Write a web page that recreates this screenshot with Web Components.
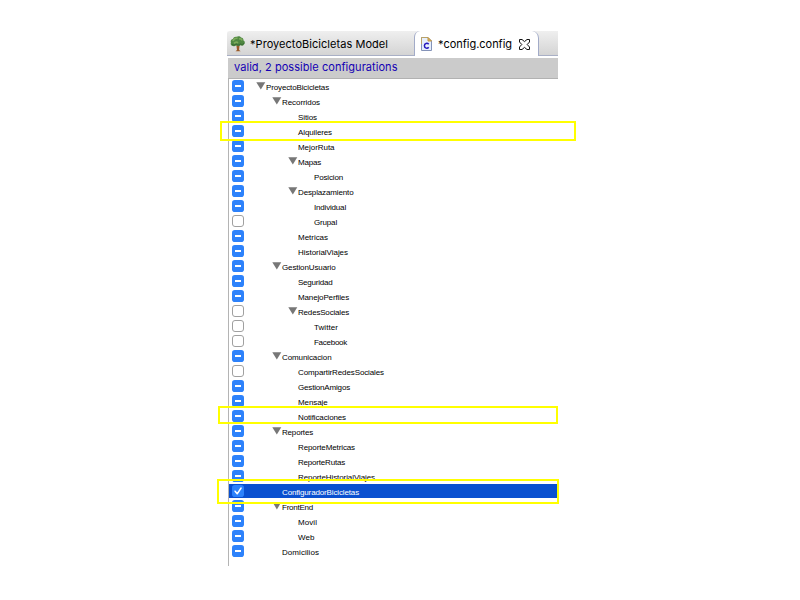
<!DOCTYPE html>
<html lang="es">
<head>
<meta charset="utf-8">
<title>config.config</title>
<style>
body { margin: 0; background: #fff; width: 800px; height: 600px; overflow: hidden; position: relative; }
.window { margin: 31px 0 0 228px; width: 330px; }
</style>
</head>
<body>
<config-editor class="window"></config-editor>
<highlight-box style="left:220px;top:121px;width:356px;height:20px"></highlight-box>
<highlight-box style="left:218px;top:406px;width:340px;height:18px"></highlight-box>
<highlight-box style="left:217px;top:479px;width:342px;height:25px"></highlight-box>
<script>
// Text whose letter spacing is adjusted so that it spans the width given.
class FitText extends HTMLElement {
  connectedCallback() {
    const root = this.attachShadow({ mode: 'open' });
    root.innerHTML = `<style>:host{display:inline-block;white-space:pre;flex:none}span{display:inline-block}</style><span></span>`;
    const span = root.querySelector('span');
    span.textContent = this.getAttribute('text');
    const want = parseFloat(this.getAttribute('span'));
    const have = span.getBoundingClientRect().width;
    if (want && have) span.style.letterSpacing = ((want - have) / span.textContent.length) + 'px';
  }
}
customElements.define('fit-text', FitText);

class HighlightBox extends HTMLElement {
  connectedCallback() {
    this.attachShadow({ mode: 'open' }).innerHTML =
      `<style>:host{display:block;position:absolute;box-sizing:border-box;border:2px solid #ff0}</style>`;
  }
}
customElements.define('highlight-box', HighlightBox);

class CheckMark extends HTMLElement {
  connectedCallback() {
    const state = this.getAttribute('state');
    const glyph = {
      some: '<rect x="3" y="5" width="6" height="2" fill="#fff"/>',
      on: '<path d="M3.1 6.2 5.2 8.8 9.1 3" fill="none" stroke="#fff" stroke-width="1.5" stroke-linecap="round" stroke-linejoin="round"/>',
      off: ''
    }[state];
    const box = state === 'off'
      ? '<rect x=".5" y=".5" width="11" height="11" rx="2.5" fill="#fff" stroke="#a0a0a0"/>'
      : '<rect width="12" height="12" rx="2.8" fill="#2d82fb"/>';
    this.attachShadow({ mode: 'open' }).innerHTML =
      `<style>:host{display:block;width:12px;height:12px;flex:none}svg{display:block}</style>
       <svg width="12" height="12">${box}${glyph}</svg>`;
  }
}
customElements.define('check-mark', CheckMark);

class TreeRow extends HTMLElement {
  connectedCallback() {
    const a = n => this.getAttribute(n);
    const level = +a('level');
    const arrow = a('arrow');
    const tri = arrow === 'small'
      ? '<path d="M1.7 5H8.1L4.9 10.6Z" fill="#777"/>'
      : arrow ? '<path d="M.3 3.2H9.3L4.8 10.4Z" fill="#777"/>' : '';
    this.attachShadow({ mode: 'open' }).innerHTML = `
      <style>
        :host{display:flex;height:15px;box-sizing:border-box;padding-left:3px;align-items:flex-start;
          font:8px/15px "Liberation Sans",Arial,sans-serif;color:#000}
        :host([selected]){background:#0a50d0;color:#fff;height:14px;margin-bottom:1px}
        check-mark{margin-top:1px}
        svg{display:block;width:10px;height:12px;flex:none;margin-left:${12 + level * 16}px}
        fit-text{padding-top:1px;height:14px}
      </style>
      <check-mark state="${a('state')}"></check-mark>
      <svg viewBox="0 0 10 12">${tri}</svg>
      <fit-text text="${a('text')}" span="${a('span')}"></fit-text>`;
  }
}
customElements.define('tree-row', TreeRow);

class EditorTab extends HTMLElement {
  connectedCallback() {
    this.attachShadow({ mode: 'open' }).innerHTML = `
      <style>
        :host{display:flex;align-items:center;height:25px;box-sizing:border-box;font:11px/23px Inter,"Open Sans",sans-serif;color:#000;flex:none}
        :host([active]){background:#fff;border:1px solid #a2abc8;border-top:0;border-bottom:0;border-radius:6px 7px 0 0}
        slot{display:flex;align-items:center}
        fit-text{padding-top:2px}
      </style>
      <slot name="icon"></slot>
      <fit-text text="${this.getAttribute('text')}" span="${this.getAttribute('span')}"></fit-text>
      <slot name="close"></slot>`;
  }
}
customElements.define('editor-tab', EditorTab);

const rows = [
  ['ProyectoBicicletas', 0, 63, 'some', 'big'],
  ['Recorridos', 1, 38, 'some', 'big'],
  ['Sitios', 2, 19, 'some'],
  ['Alquileres', 2, 34, 'some'],
  ['MejorRuta', 2, 36.5, 'some'],
  ['Mapas', 2, 23, 'some', 'big'],
  ['Posicion', 3, 29, 'some'],
  ['Desplazamiento', 2, 55.5, 'some', 'big'],
  ['Individual', 3, 32, 'some'],
  ['Grupal', 3, 23, 'off'],
  ['Metricas', 2, 30, 'some'],
  ['HistorialViajes', 2, 50, 'some'],
  ['GestionUsuario', 1, 53.5, 'some', 'big'],
  ['Seguridad', 2, 34.5, 'some'],
  ['ManejoPerfiles', 2, 51, 'some'],
  ['RedesSociales', 2, 51, 'off', 'big'],
  ['Twitter', 3, 24, 'off'],
  ['Facebook', 3, 33, 'off'],
  ['Comunicacion', 1, 49.5, 'some', 'big'],
  ['CompartirRedesSociales', 2, 86, 'off'],
  ['GestionAmigos', 2, 52, 'some'],
  ['Mensaje', 2, 29.5, 'some'],
  ['Notificaciones', 2, 48, 'some'],
  ['Reportes', 1, 31, 'some', 'big'],
  ['ReporteMetricas', 2, 57, 'some'],
  ['ReporteRutas', 2, 47, 'some'],
  ['ReporteHistorialViajes', 2, 77, 'some'],
  ['ConfiguradorBicicletas', 1, 77, 'on'],
  ['FrontEnd', 1, 31, 'some', 'small'],
  ['Movil', 2, 19, 'some'],
  ['Web', 2, 16.5, 'some'],
  ['Domicilios', 1, 37, 'some']
];

class ConfigEditor extends HTMLElement {
  connectedCallback() {
    this.attachShadow({ mode: 'open' }).innerHTML = `
      <style>
        :host{display:block}
        .tabs{display:flex;height:25px;margin-left:-1px;background:linear-gradient(#efefef,#d3d3d3);box-shadow:inset 0 -1px #a9b0c6;border-top-left-radius:3px}
        .tabs svg{display:block}
        .first{width:187px;padding-left:3px}
        .first svg{margin-right:4px}
        .second{width:125px;padding-left:6px}
        .second .doc{margin:1px 6px 0 0}
        .second .x{margin:2px 0 0 7px}
        .status{height:21px;margin-top:2px;box-sizing:border-box;background:#cbcbcb;border-bottom:1px solid #b2b2b2;
          padding-left:6px;font:11px/18px Inter,"Open Sans",sans-serif;color:#1400b4}
        .tree{border-left:1px solid #b4b4b4;height:487px;margin-right:1px}
      </style>
      <div class="tabs">
        <editor-tab class="first" text="*ProyectoBicicletas Model" span="138">
          <svg slot="icon" width="16" height="16" viewBox="0 0 16 16">
            <path d="M6.2 8 7 14 5.5 15.3H10.7L9.1 14 9.5 9.5 12 7Z" fill="#9a5a28"/>
            <path d="M3 10.1C.9 9.8.2 8 1 6.6.1 5 1.3 3.2 3 3 3.4 1.2 5.1.4 6.7.8 8-.1 10.2.1 11 1.4 12.8 1.5 13.8 3 13.3 4.2 15.1 5 15.3 7.3 14 8.4 13.3 9.8 11.5 10.1 10.4 9.3 9 10.5 7.2 10.2 6.3 9.2 5.3 10.3 4 10.5 3 10.1Z" fill="#4f8742"/>
            <path d="M3 5C4 2.7 6 2 7.6 2.4M9 3C10.5 2.3 11.8 3.4 12 4.5M4 7.4C5.3 6 7 6 8 6.8" fill="none" stroke="#7dab5c" stroke-width="1.7"/>
            <path d="M2 8.4C4 9.8 5 8.5 6.3 8.2 8 9.4 9.7 9 10.6 8 12 9 13 8.4 14 7.2" fill="none" stroke="#356534" stroke-width="1"/>
          </svg>
        </editor-tab>
        <editor-tab active class="second" text="*config.config" span="74">
          <svg slot="icon" class="doc" width="11" height="14" viewBox="0 0 11 14">
            <path d="M.5 .5H7L10.5 4V13.5H.5Z" fill="#e6effc" stroke="#8493b8"/>
            <path d="M.5 7V.5H7" fill="none" stroke="#b9a268"/>
            <path d="M7 .5V4H10.5Z" fill="#dfb662" stroke="#c19743"/>
            <path d="M7.7 7.3C6.4 5.6 3.4 6.2 3.4 8.8 3.4 11.4 6.4 11.9 7.7 10.3" fill="none" stroke="#2618bd" stroke-width="1.5"/>
          </svg>
          <svg slot="close" class="x" width="11" height="11" viewBox="0 0 11 11">
            <path d="M.5 .5H3L5.5 2.6 8 .5H10.5V3L8.2 5.5 10.5 8V10.5H8L5.5 8.4 3 10.5H.5V8L2.8 5.5 .5 3Z" fill="#fff" stroke="#111"/>
          </svg>
        </editor-tab>
      </div>
      <div class="status"><fit-text text="valid, 2 possible configurations" span="163.5"></fit-text></div>
      <div class="tree">${rows.map(([t, l, w, s, ar]) =>
        `<tree-row text="${t}" level="${l}" span="${w}" state="${s}" arrow="${ar || ''}"${s === 'on' ? ' selected' : ''}></tree-row>`).join('')}</div>`;
  }
}
customElements.define('config-editor', ConfigEditor);
</script>
</body>
</html>
